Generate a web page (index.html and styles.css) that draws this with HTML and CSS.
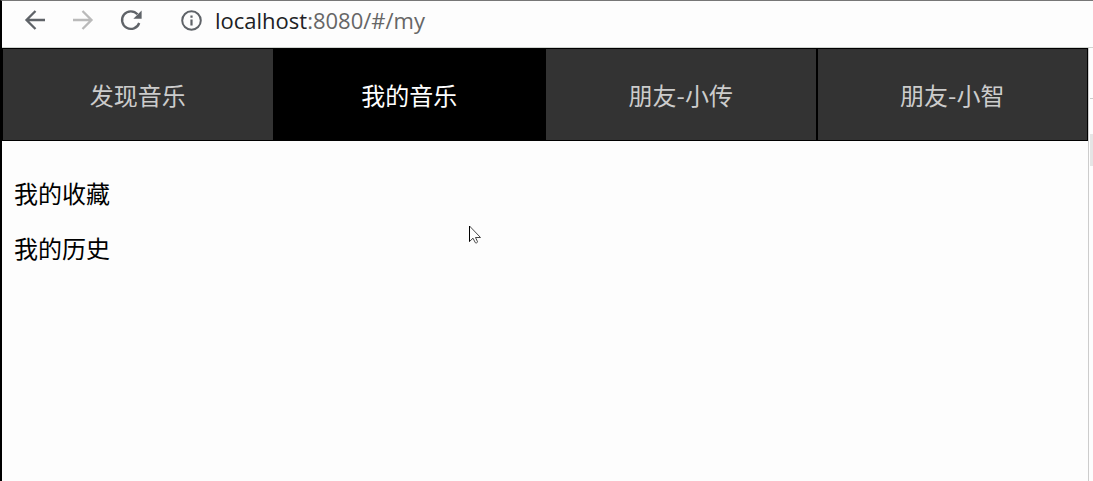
FILE: index.html
```html
<!DOCTYPE html>
<html lang="zh-CN">
<head>
<meta charset="utf-8">
<meta name="viewport" content="width=device-width, initial-scale=1">
<title>我的音乐</title>
<link rel="stylesheet" href="styles.css">
</head>
<body>
<div class="window">
  <header class="toolbar">
    <button class="tool" type="button" aria-label="Back">
      <svg viewBox="0 0 24 24" width="24" height="24"><path d="M22 12H4M12.500 3L3.500 12l9 9" fill="none" stroke="#5f6368" stroke-width="2.300"/></svg>
    </button>
    <button class="tool" type="button" aria-label="Forward" disabled>
      <svg viewBox="0 0 24 24" width="24" height="24"><path d="M2 12h18M11.500 3l9 9-9 9" fill="none" stroke="#bababa" stroke-width="2.300"/></svg>
    </button>
    <button class="tool" type="button" aria-label="Reload">
      <svg viewBox="0 0 24 24" width="24" height="24"><path d="M20.200 15A8.800 8.800 0 1 1 18.500 6.300" fill="none" stroke="#5f6368" stroke-width="2.300"/><path d="M22.600 2.500v8.200h-8.200z" fill="#5f6368"/></svg>
    </button>
    <button class="tool tool-info" type="button" aria-label="Site information">
      <svg viewBox="0 0 24 24" width="24" height="24"><circle cx="12.500" cy="12.500" r="9.300" fill="none" stroke="#5f6368" stroke-width="2"/><path d="M12.500 7.500v2.200M12.500 11.500v6" stroke="#5f6368" stroke-width="2.200"/></svg>
    </button>
    <div class="address" role="textbox" contenteditable="true" spellcheck="false" aria-label="Address"><span class="host">localhost</span>:8080/#/my</div>
  </header>
  <div class="viewport">
    <div class="page">
      <nav class="nav">
        <a class="nav-link" href="#/find">发现音乐</a>
        <a class="nav-link active" href="#/my" aria-current="page">我的音乐</a>
        <a class="nav-link" href="#/part/1">朋友-小传</a>
        <a class="nav-link" href="#/part/2">朋友-小智</a>
      </nav>
      <main class="content">
        <p class="item">我的收藏</p>
        <p class="item">我的历史</p>
      </main>
    </div>
    <aside class="panel">
      <div class="panel-head"></div>
      <div class="panel-row"></div>
    </aside>
  </div>
  <svg class="cursor" viewBox="0 0 12 19" width="12" height="19" aria-hidden="true"><path d="M.5 1v15.500l3.500-3.300 2.300 4.500c.6.700 2.300 0 2.200-1L6.500 12.500h5z" fill="#fff" stroke="#333" stroke-width=".9"/><path d="M.5 1v15.500" stroke="#000" stroke-width="1"/></svg>
</div>
</body>
</html>
```
FILE: styles.css
```css
* {
  box-sizing: border-box;
}

body {
  margin: 0;
  background: #fdfdfd;
  color: #000;
  font-family: "Noto Sans CJK SC", "Noto Sans", sans-serif;
  font-size: 24px;
}

.window {
  position: relative;
  display: flex;
  flex-direction: column;
  min-height: 100vh;
  border-top: 1px solid #777;
  border-left: 2px solid #000;
}

.toolbar {
  display: flex;
  align-items: center;
  gap: 24px;
  padding: 0 21px 8px;
  border-bottom: 1px solid #d0d4d0;
}

.tool {
  display: flex;
  padding: 0;
  border: 0;
  background: none;
}

.tool-info {
  margin-left: 12px;
}

.address {
  flex: 1;
  margin-left: -12px;
  color: #666;
  font-family: "Open Sans", sans-serif;
  font-size: 22px;
  line-height: 38px;
  outline: 0;
}

.host {
  color: #202124;
}

.viewport {
  display: flex;
  flex: 1;
}

.page {
  flex: 1;
}

.nav {
  display: flex;
  background: #333;
}

.nav-link {
  flex: 1;
  padding: 28px 0 27px;
  border: 1px solid #000;
  color: #ccc;
  line-height: 36px;
  text-align: center;
  text-decoration: none;
}

.nav-link.active {
  background: #000;
  color: #fff;
}

.content {
  padding: 34px 12px;
}

.item {
  margin: 0 0 19px;
  line-height: 36px;
}

.panel {
  width: 5px;
  border-left: 1px solid #ccc;
}

.panel-head {
  height: 51px;
  margin-left: 1px;
  border-bottom: 1px solid #ccc;
}

.panel-row {
  height: 32px;
  margin: 35px 0 0 1px;
  background: #e5e5e5;
}

.cursor {
  position: absolute;
  top: 224px;
  left: 467px;
}
```
